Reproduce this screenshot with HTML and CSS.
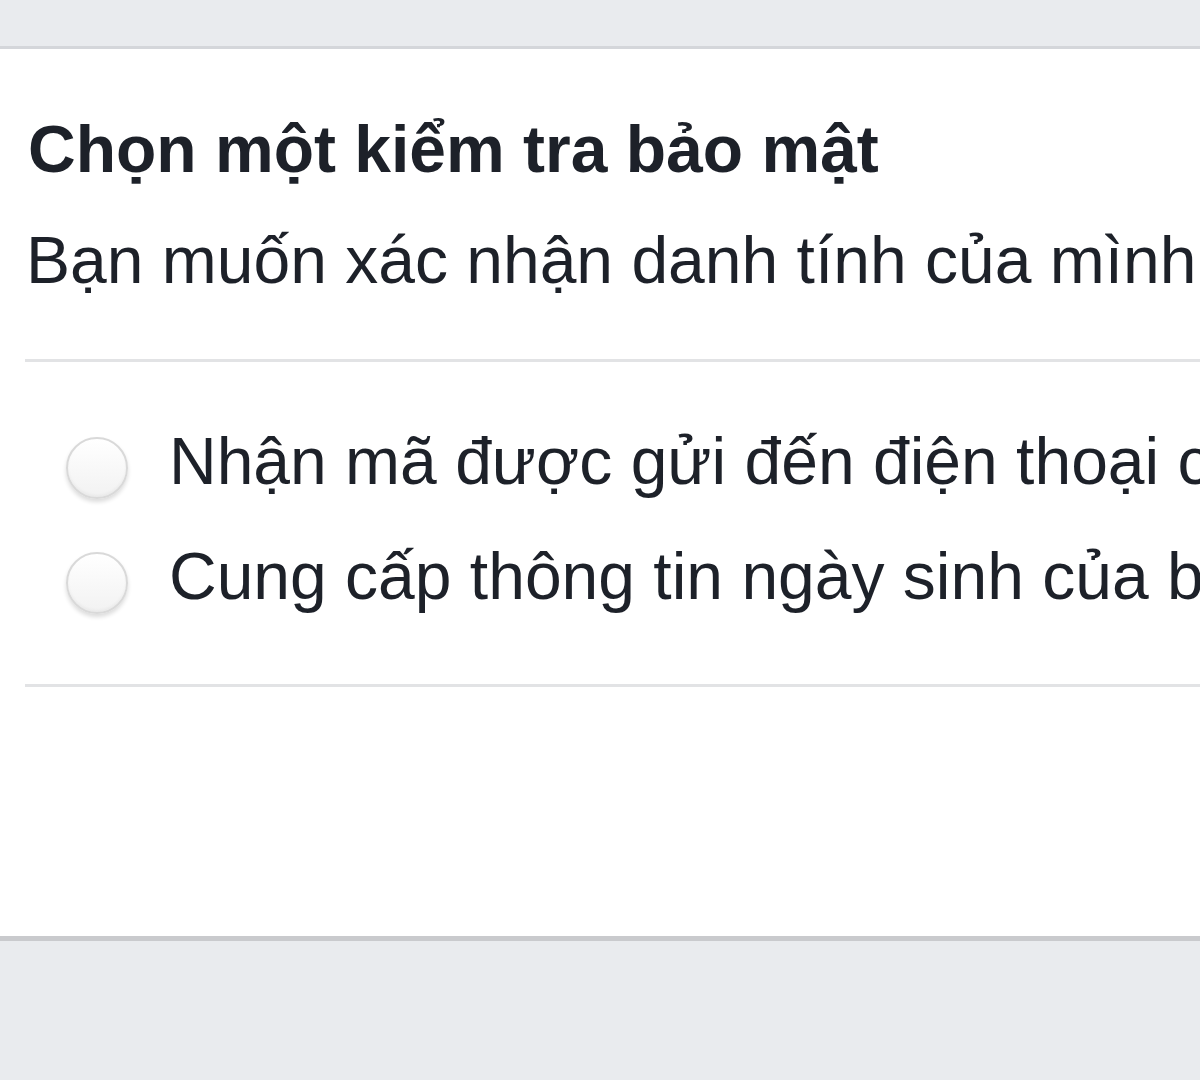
FILE: index.html
```html
<!DOCTYPE html>
<html lang="vi">
<head>
<meta charset="utf-8">
<title>Chọn một kiểm tra bảo mật</title>
<link rel="stylesheet" href="styles.css">
</head>
<body>
<div class="topbar"></div>
<div class="card">
  <h1 class="title">Chọn một kiểm tra bảo mật</h1>
  <p class="subtitle">Bạn muốn xác nhận danh tính của mình như thế nào?</p>
  <div class="divider"></div>
  <ul class="options">
    <li class="option"><span class="radio"></span><span class="label">Nhận mã được gửi đến điện thoại của bạn</span></li>
    <li class="option"><span class="radio"></span><span class="label">Cung cấp thông tin ngày sinh của bạn</span></li>
  </ul>
  <div class="divider"></div>
</div>
<div class="bottom"></div>
</body>
</html>
```
FILE: styles.css
```css
html, body {
  margin: 0;
  padding: 0;
  background: #e9ebee;
  overflow: hidden;
}
body {
  width: 1200px;
  height: 1080px;
  font-family: "Liberation Sans", Arial, sans-serif;
  color: #1d2129;
}
.topbar {
  height: 46px;
  background: #e9ebee;
  border-bottom: 3px solid #d4d6da;
}
.card {
  background: #fff;
  height: 892px;
  padding: 60px 0 0 25px;
  box-sizing: border-box;
  border-bottom: 5px solid #c9cacd;
  white-space: nowrap;
  overflow: hidden;
}
.title {
  margin: 0;
  padding-left: 3px;
  font-size: 66px;
  line-height: 80px;
  font-weight: 700;
  color: #1d2129;
}
.subtitle {
  margin: 26px 0 0;
  padding-left: 1px;
  font-size: 66px;
  line-height: 90px;
  font-weight: 400;
  color: #1d2129;
}
.divider {
  height: 3px;
  background: #e2e3e5;
  margin-top: 54px;
}
.options {
  list-style: none;
  margin: 42px 0 0;
  padding: 0;
}
.option {
  display: flex;
  align-items: center;
  height: 115px;
  font-size: 66px;
  line-height: 115px;
}
.options + .divider {
  margin-top: 50px;
}
.radio {
  flex: none;
  width: 58px;
  height: 58px;
  margin: 13px 41px 0 41px;
  border-radius: 50%;
  border: 2px solid #d9d9d9;
  background: linear-gradient(#ffffff, #f2f2f2);
  box-shadow: 0 3px 4px rgba(0, 0, 0, 0.14), inset 0 -2px 3px rgba(0, 0, 0, 0.04);
}
.label {
  color: #1d2129;
}
```
